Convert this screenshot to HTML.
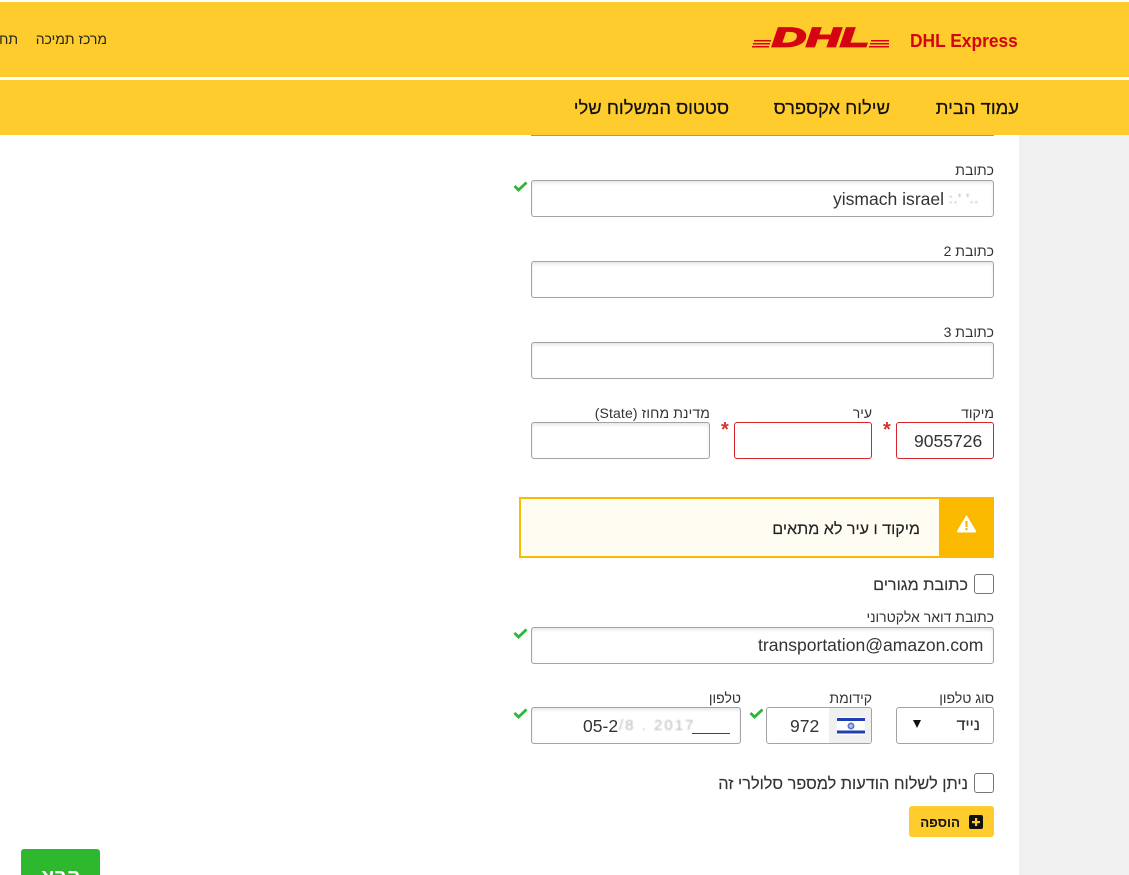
<!DOCTYPE html>
<html lang="he" dir="rtl">
<head>
<meta charset="utf-8">
<title>DHL Express</title>
<style>
html,body{margin:0;padding:0;background:#fff;width:1129px;height:875px;overflow:hidden;}
body{position:relative;font-family:"Liberation Sans","Noto Sans CJK JP",sans-serif;color:#333;}
.abs{position:absolute;}
.bar{position:absolute;left:0;width:1129px;background:#ffcc2e;}
.t{position:absolute;white-space:nowrap;direction:rtl;}
.nav{font-size:18.4px;line-height:22px;color:#111;top:97px;-webkit-text-stroke:.2px #111;}
.lbl{font-size:14px;line-height:16px;color:#333;}
.inp{position:absolute;box-sizing:border-box;border:1px solid #a3a3a3;border-radius:3px;background:#fff;box-shadow:inset 0 2px 3px rgba(0,0,0,.1);}
.err{border-color:#d9232a;box-shadow:none;}
.val{font-size:17.55px;line-height:22px;color:#333;direction:ltr;}
.check{position:absolute;width:15px;height:12px;}
.star{position:absolute;font-size:20px;line-height:18px;color:#d4352a;font-weight:bold;}
.cb{position:absolute;box-sizing:border-box;width:20px;height:20px;border:1px solid #777;border-radius:3px;background:#fff;}
.blur{position:absolute;white-space:nowrap;direction:ltr;color:#9a9a9a;filter:blur(.7px);}
</style>
</head>
<body>
<div class="bar" style="top:2px;height:75px"></div>
<div class="bar" style="top:80px;height:55px"></div>
<div class="abs" style="left:1019px;top:135px;width:110px;height:740px;background:#f0f0f0"></div>

<svg class="abs" style="left:750px;top:24px;direction:ltr" width="142" height="26" viewBox="0 0 142 26" direction="ltr">
  <g fill="#d40511">
    <rect x="4" y="16" width="17" height="1.5"/><rect x="3" y="19" width="17" height="1.5"/><rect x="2" y="22" width="17" height="1.5"/>
    <rect x="121" y="16" width="18" height="1.5"/><rect x="120" y="19" width="19" height="1.5"/><rect x="119" y="22" width="20" height="1.5"/>
    <text x="22" y="22.5" direction="ltr" text-anchor="start" font-family="Liberation Sans" font-weight="bold" font-style="italic" font-size="27" textLength="97" lengthAdjust="spacingAndGlyphs" stroke="#d40511" stroke-width="1.7">DHL</text>
  </g>
</svg>
<div class="t" style="left:910px;top:31px;font-size:18px;line-height:21px;font-weight:bold;color:#d40511;direction:ltr;transform-origin:left;transform:scaleX(.965)">DHL Express</div>

<div class="t" style="right:1022px;top:31px;font-size:14px;line-height:16px;color:#222">מרכז תמיכה</div>
<div class="t" style="left:0;top:31px;width:18px;overflow:hidden;font-size:14px;line-height:16px;color:#222;text-align:right">תח</div>

<div class="t nav" style="right:110px">עמוד הבית</div>
<div class="t nav" style="right:239px">שילוח אקספרס</div>
<div class="t nav" style="right:400px">סטטוס המשלוח שלי</div>

<div class="abs" style="left:531px;top:135px;width:463px;height:1px;background:#999"></div>

<div class="t lbl" style="right:135px;top:162px">כתובת</div>
<svg class="check" style="left:513px;top:181px" viewBox="0 0 15 12"><path d="M1.5 5 L5.5 9 L13.5 1.5" fill="none" stroke="#2db53a" stroke-width="2.8"/></svg>
<div class="inp" style="left:531px;top:180px;width:463px;height:37px"></div>
<div class="t val" style="left:833px;top:188px">yismach israel</div>
<div class="blur" style="left:949px;top:192px;font-size:13px;line-height:14px;letter-spacing:1px;color:#8f8f8f">:.' '..</div>

<div class="t lbl" style="right:135px;top:243px">כתובת 2</div>
<div class="inp" style="left:531px;top:261px;width:463px;height:37px"></div>
<div class="t lbl" style="right:135px;top:324px">כתובת 3</div>
<div class="inp" style="left:531px;top:342px;width:463px;height:37px"></div>

<div class="t lbl" style="right:135px;top:405px">מיקוד</div>
<div class="t lbl" style="right:257px;top:405px">עיר</div>
<div class="t lbl" style="right:419px;top:405px;letter-spacing:.13px">מדינת מחוז (State)</div>
<div class="inp err" style="left:896px;top:422px;width:98px;height:37px"></div>
<div class="t val" style="left:914px;top:430px">9055726</div>
<div class="inp err" style="left:734px;top:422px;width:138px;height:37px"></div>
<div class="inp" style="left:531px;top:422px;width:179px;height:37px"></div>
<div class="star" style="left:883px;top:421px">*</div>
<div class="star" style="left:721px;top:421px">*</div>

<div class="abs" style="left:519px;top:497px;width:475px;height:61px;box-sizing:border-box;border:2px solid #fbba00;background:#fffcf2"></div>
<div class="abs" style="left:939px;top:497px;width:55px;height:61px;background:#fbba00"></div>
<svg class="abs" style="left:956px;top:514px" width="21" height="20" viewBox="0 0 21 20">
  <path d="M10.5 2 L19.5 17 Q19.8 18 18.8 18 L2.2 18 Q1.2 18 1.5 17 Z" fill="#fff" stroke="#fff" stroke-linejoin="round"/>
  <rect x="9.4" y="7" width="2.2" height="6" fill="#fbba00"/><rect x="9.4" y="14" width="2.2" height="2.2" fill="#fbba00"/>
</svg>
<div class="t" style="right:209px;top:518px;font-size:16.1px;line-height:22px;color:#222;-webkit-text-stroke:.15px #222">מיקוד ו עיר לא מתאים</div>

<div class="cb" style="left:974px;top:574px"></div>
<div class="t" style="right:161px;top:574px;font-size:16.2px;line-height:22px;color:#333;-webkit-text-stroke:.15px #333">כתובת מגורים</div>

<div class="t lbl" style="right:135px;top:609px">כתובת דואר אלקטרוני</div>
<svg class="check" style="left:513px;top:628px" viewBox="0 0 15 12"><path d="M1.5 5 L5.5 9 L13.5 1.5" fill="none" stroke="#2db53a" stroke-width="2.8"/></svg>
<div class="inp" style="left:531px;top:627px;width:463px;height:37px"></div>
<div class="t val" style="left:758px;top:634px">transportation@amazon.com</div>

<div class="t lbl" style="right:135px;top:690px">סוג טלפון</div>
<div class="t lbl" style="right:257px;top:690px">קידומת</div>
<div class="t lbl" style="right:388px;top:690px">טלפון</div>

<div class="inp" style="left:896px;top:707px;width:98px;height:37px;box-shadow:none"></div>
<div class="t" style="right:149px;top:715px;font-size:16px;line-height:22px;color:#333;-webkit-text-stroke:.2px #333">נייד</div>
<div class="abs" style="left:913px;top:720px;width:0;height:0;border-left:4.5px solid transparent;border-right:4.5px solid transparent;border-top:8px solid #111"></div>

<svg class="check" style="left:749px;top:708px" viewBox="0 0 15 12"><path d="M1.5 5 L5.5 9 L13.5 1.5" fill="none" stroke="#2db53a" stroke-width="2.8"/></svg>
<div class="inp" style="left:766px;top:707px;width:106px;height:37px;box-shadow:none;overflow:hidden">
  <div class="abs" style="left:62px;top:0;width:43px;height:35px;background:#f0f0f0"></div>
</div>
<svg class="abs" style="left:837px;top:717px" width="28" height="18" viewBox="0 0 28 18">
  <rect width="28" height="18" fill="#fff"/>
  <rect y="1" width="28" height="3" fill="#1f3fb0"/><rect y="13.5" width="28" height="3" fill="#1f3fb0"/>
  <circle cx="14" cy="9" r="2.6" fill="#b9c7ee" stroke="#5b78cc" stroke-width="1.8"/>
</svg>
<div class="t val" style="left:790px;top:715px">972</div>

<svg class="check" style="left:513px;top:708px" viewBox="0 0 15 12"><path d="M1.5 5 L5.5 9 L13.5 1.5" fill="none" stroke="#2db53a" stroke-width="2.8"/></svg>
<div class="inp" style="left:531px;top:707px;width:210px;height:37px"></div>
<div class="t val" style="left:583px;top:715px">05-2</div>
<div class="blur" style="left:619px;top:718px;font-size:15px;line-height:16px;color:#bdbdbd;letter-spacing:2px">/8 . 2017</div>
<div class="abs" style="left:692px;top:733px;width:38px;height:1px;background:#444"></div>

<div class="cb" style="left:974px;top:773px"></div>
<div class="t" style="right:161px;top:773px;font-size:16.3px;line-height:22px;color:#333;-webkit-text-stroke:.15px #333">ניתן לשלוח הודעות למספר סלולרי זה</div>

<div class="abs" style="left:909px;top:806px;width:85px;height:31px;background:#ffcc2e;border-radius:3px"></div>
<svg class="abs" style="left:969px;top:815px" width="14" height="14" viewBox="0 0 14 14">
  <rect width="14" height="14" rx="2" fill="#111"/>
  <rect x="6" y="3" width="2.2" height="8" fill="#ffcc2e"/><rect x="3" y="6" width="8" height="2.2" fill="#ffcc2e"/>
</svg>
<div class="t" style="right:169px;top:815px;font-size:13.3px;line-height:15px;font-weight:bold;color:#111">הוספה</div>

<div class="abs" style="left:21px;top:849px;width:79px;height:40px;background:#2eb82e;border-radius:3px"></div>
<div class="t" style="left:21px;width:79px;top:865px;font-size:20px;line-height:24px;font-weight:bold;color:#fff;text-align:center">הבא</div>
</body>
</html>
